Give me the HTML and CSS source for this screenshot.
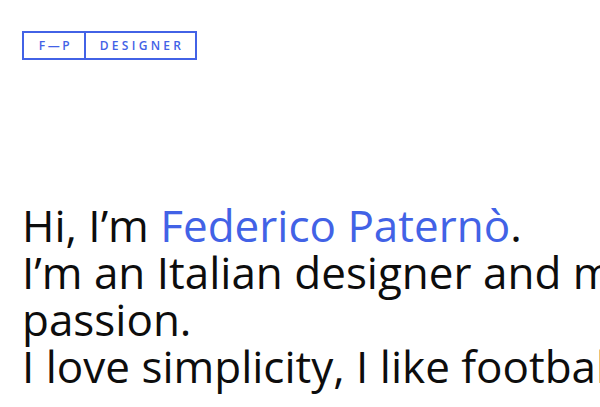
FILE: index.html
```html
<!DOCTYPE html>
<html lang="en">
<head>
<meta charset="utf-8">
<title>Federico Paternò — Designer</title>
<link rel="stylesheet" href="styles.css">
</head>
<body>
<div class="page">
  <header class="header">
    <a class="logo" href="#">
      <span class="logo-mark">F—P</span>
      <span class="logo-text">DESIGNER</span>
    </a>
  </header>
  <main class="intro">
    <p class="intro-text">Hi, I’m <span class="accent">Federico Paternò</span>.<br>I’m an Italian designer and my work is my<br>passion.<br>I love simplicity, I like football and good food.</p>
  </main>
</div>
</body>
</html>
```
FILE: styles.css
```css
html, body {
  margin: 0;
  padding: 0;
  background: #ffffff;
  overflow: hidden;
}
.page {
  width: 600px;
  height: 407px;
  overflow: hidden;
  padding: 31px 0 0 22px;
  box-sizing: border-box;
  font-family: "Open Sans", "Liberation Sans", sans-serif;
}
.header {
  display: flex;
}
.logo {
  display: flex;
  width: 175px;
  height: 29px;
  border: 2px solid #4262e6;
  box-sizing: border-box;
  color: #4262e6;
  text-decoration: none;
  font-size: 12px;
  font-weight: 600;
  letter-spacing: 3.3px;
}
.logo-mark,
.logo-text {
  display: flex;
  align-items: center;
  justify-content: center;
  padding-left: 3px;
}
.logo-mark {
  width: 62px;
  box-sizing: border-box;
  border-right: 2px solid #4262e6;
  letter-spacing: 2.6px;
}
.logo-text {
  flex: 1;
}
.intro {
  margin-top: 142px;
}
.intro-text {
  margin: 0;
  width: 1200px;
  font-size: 44px;
  line-height: 47px;
  color: #0d0d0d;
  font-weight: 400;
}
.accent {
  color: #4262e6;
}
```
